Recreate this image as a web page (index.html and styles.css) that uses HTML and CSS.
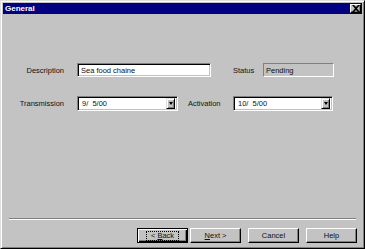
FILE: index.html
```html
<!DOCTYPE html>
<html lang="en">

<head>
    <meta charset="UTF-8">
    <title>General</title>
    <link rel="stylesheet" href="styles.css">
</head>

<body>
    <div class="window">
        <div class="titlebar">
            <span class="title">General</span>
            <div class="close">
                <svg width="8" height="7" viewBox="0 0 8 7">
                    <path d="M0 0h2l2 2 2-2h2L5 3.5 8 7H6L4 5 2 7H0l3-3.5z" fill="#000" />
                </svg>
            </div>
        </div>

        <div class="content">
            <div class="row first">
                <label class="lbl">Description</label>
                <div class="field desc">Sea food chaine</div>
                <label class="lbl2 status-lbl">Status</label>
                <div class="readonly">Pending</div>
            </div>

            <div class="row second">
                <label class="lbl">Transmission</label>
                <div class="field combo c1">
                    <span class="val">9/&nbsp; 5/00</span>
                    <span class="drop"><i></i></span>
                </div>
                <label class="lbl2 act-lbl">Activation</label>
                <div class="field combo c2">
                    <span class="val">10/&nbsp; 5/00</span>
                    <span class="drop"><i></i></span>
                </div>
            </div>
        </div>

        <div class="separator"></div>

        <div class="buttons">
            <div class="btn default"><span class="focus">&lt; <u>B</u>ack</span></div>
            <div class="btn next"><span><u>N</u>ext &gt;</span></div>
            <div class="btn"><span>Cancel</span></div>
            <div class="btn"><span>Help</span></div>
        </div>
    </div>
</body>

</html>
```

FILE: styles.css
```css
* {
    padding: 0;
    margin: 0;
    box-sizing: border-box;
}

body {
    background-color: #c0c0c0;
    font-family: "Liberation Sans", Arial, sans-serif;
    font-size: 7.5px;
    color: #111;
}

.window {
    display: flex;
    flex-direction: column;
    width: 365px;
    height: 249px;
    background-color: #c3c3c3;
    border: 1px solid;
    border-color: #dfdfdf #000 #000 #dfdfdf;
    box-shadow: inset 1px 1px #fff, inset -1px -1px #808080;
    padding: 2px;
}

.titlebar {
    display: flex;
    align-items: center;
    justify-content: space-between;
    height: 11px;
    background-color: #000080;
    padding: 0 1px 0 2px;
}

.title {
    color: #fff;
    font-weight: bold;
    font-size: 8px;
}

.close {
    display: flex;
    align-items: center;
    justify-content: center;
    width: 11px;
    height: 9px;
    background-color: #c0c0c0;
    border: 1px solid;
    border-color: #fff #000 #000 #fff;
    box-shadow: inset -1px -1px #808080;
}

.content {
    display: flex;
    flex-direction: column;
}

.row {
    display: flex;
    align-items: center;
}

.row.first {
    margin-top: 49px;
}

.row.second {
    margin-top: 19px;
}

.lbl {
    width: 61px;
    text-align: right;
    margin-right: 13px;
}

.field {
    background-color: #fff;
    border: 1px solid;
    border-color: #808080 #fff #fff #808080;
    box-shadow: inset 1px 1px #000, inset -1px -1px #c0c0c0;
    display: flex;
    align-items: center;
    padding-left: 3px;
}

.desc {
    width: 134px;
    height: 14px;
}

.status-lbl {
    margin-left: 22px;
    width: 30px;
}

.act-lbl {
    margin-left: 10px;
    width: 45px;
}

.readonly {
    display: flex;
    align-items: center;
    width: 71px;
    height: 14px;
    border: 1px solid;
    border-color: #808080 #fff #fff #808080;
    padding-left: 2px;
}

.combo {
    height: 15px;
    justify-content: space-between;
    padding: 2px;
    padding-left: 4px;
}

.c1 {
    width: 101px;
}

.c2 {
    width: 100px;
}

.drop {
    display: flex;
    align-items: center;
    justify-content: center;
    width: 9px;
    height: 11px;
    background-color: #c0c0c0;
    border: 1px solid;
    border-color: #dfdfdf #000 #000 #dfdfdf;
    box-shadow: inset 1px 1px #fff, inset -1px -1px #808080;
}

.drop i {
    width: 0;
    height: 0;
    border-left: 2.5px solid transparent;
    border-right: 2.5px solid transparent;
    border-top: 3px solid #000;
}

.separator {
    margin: auto 6px 0 6px;
    height: 2px;
    border-top: 1px solid #808080;
    border-bottom: 1px solid #fff;
}

.buttons {
    display: flex;
    justify-content: flex-end;
    gap: 7px;
    margin: 8px 5px 3px 0;
}

.btn {
    display: flex;
    align-items: center;
    justify-content: center;
    width: 51px;
    height: 15px;
    border: 1px solid;
    border-color: #fff #000 #000 #fff;
    box-shadow: inset -1px -1px #808080;
}

.btn.default {
    border-color: #000;
    box-shadow: inset 1px 1px #fff, inset -1px -1px #000, inset -2px -2px #808080;
    margin-right: -5px;
}

.focus {
    border: 1px dotted #000;
    padding: 0 4px;
    line-height: 8px;
}
```
